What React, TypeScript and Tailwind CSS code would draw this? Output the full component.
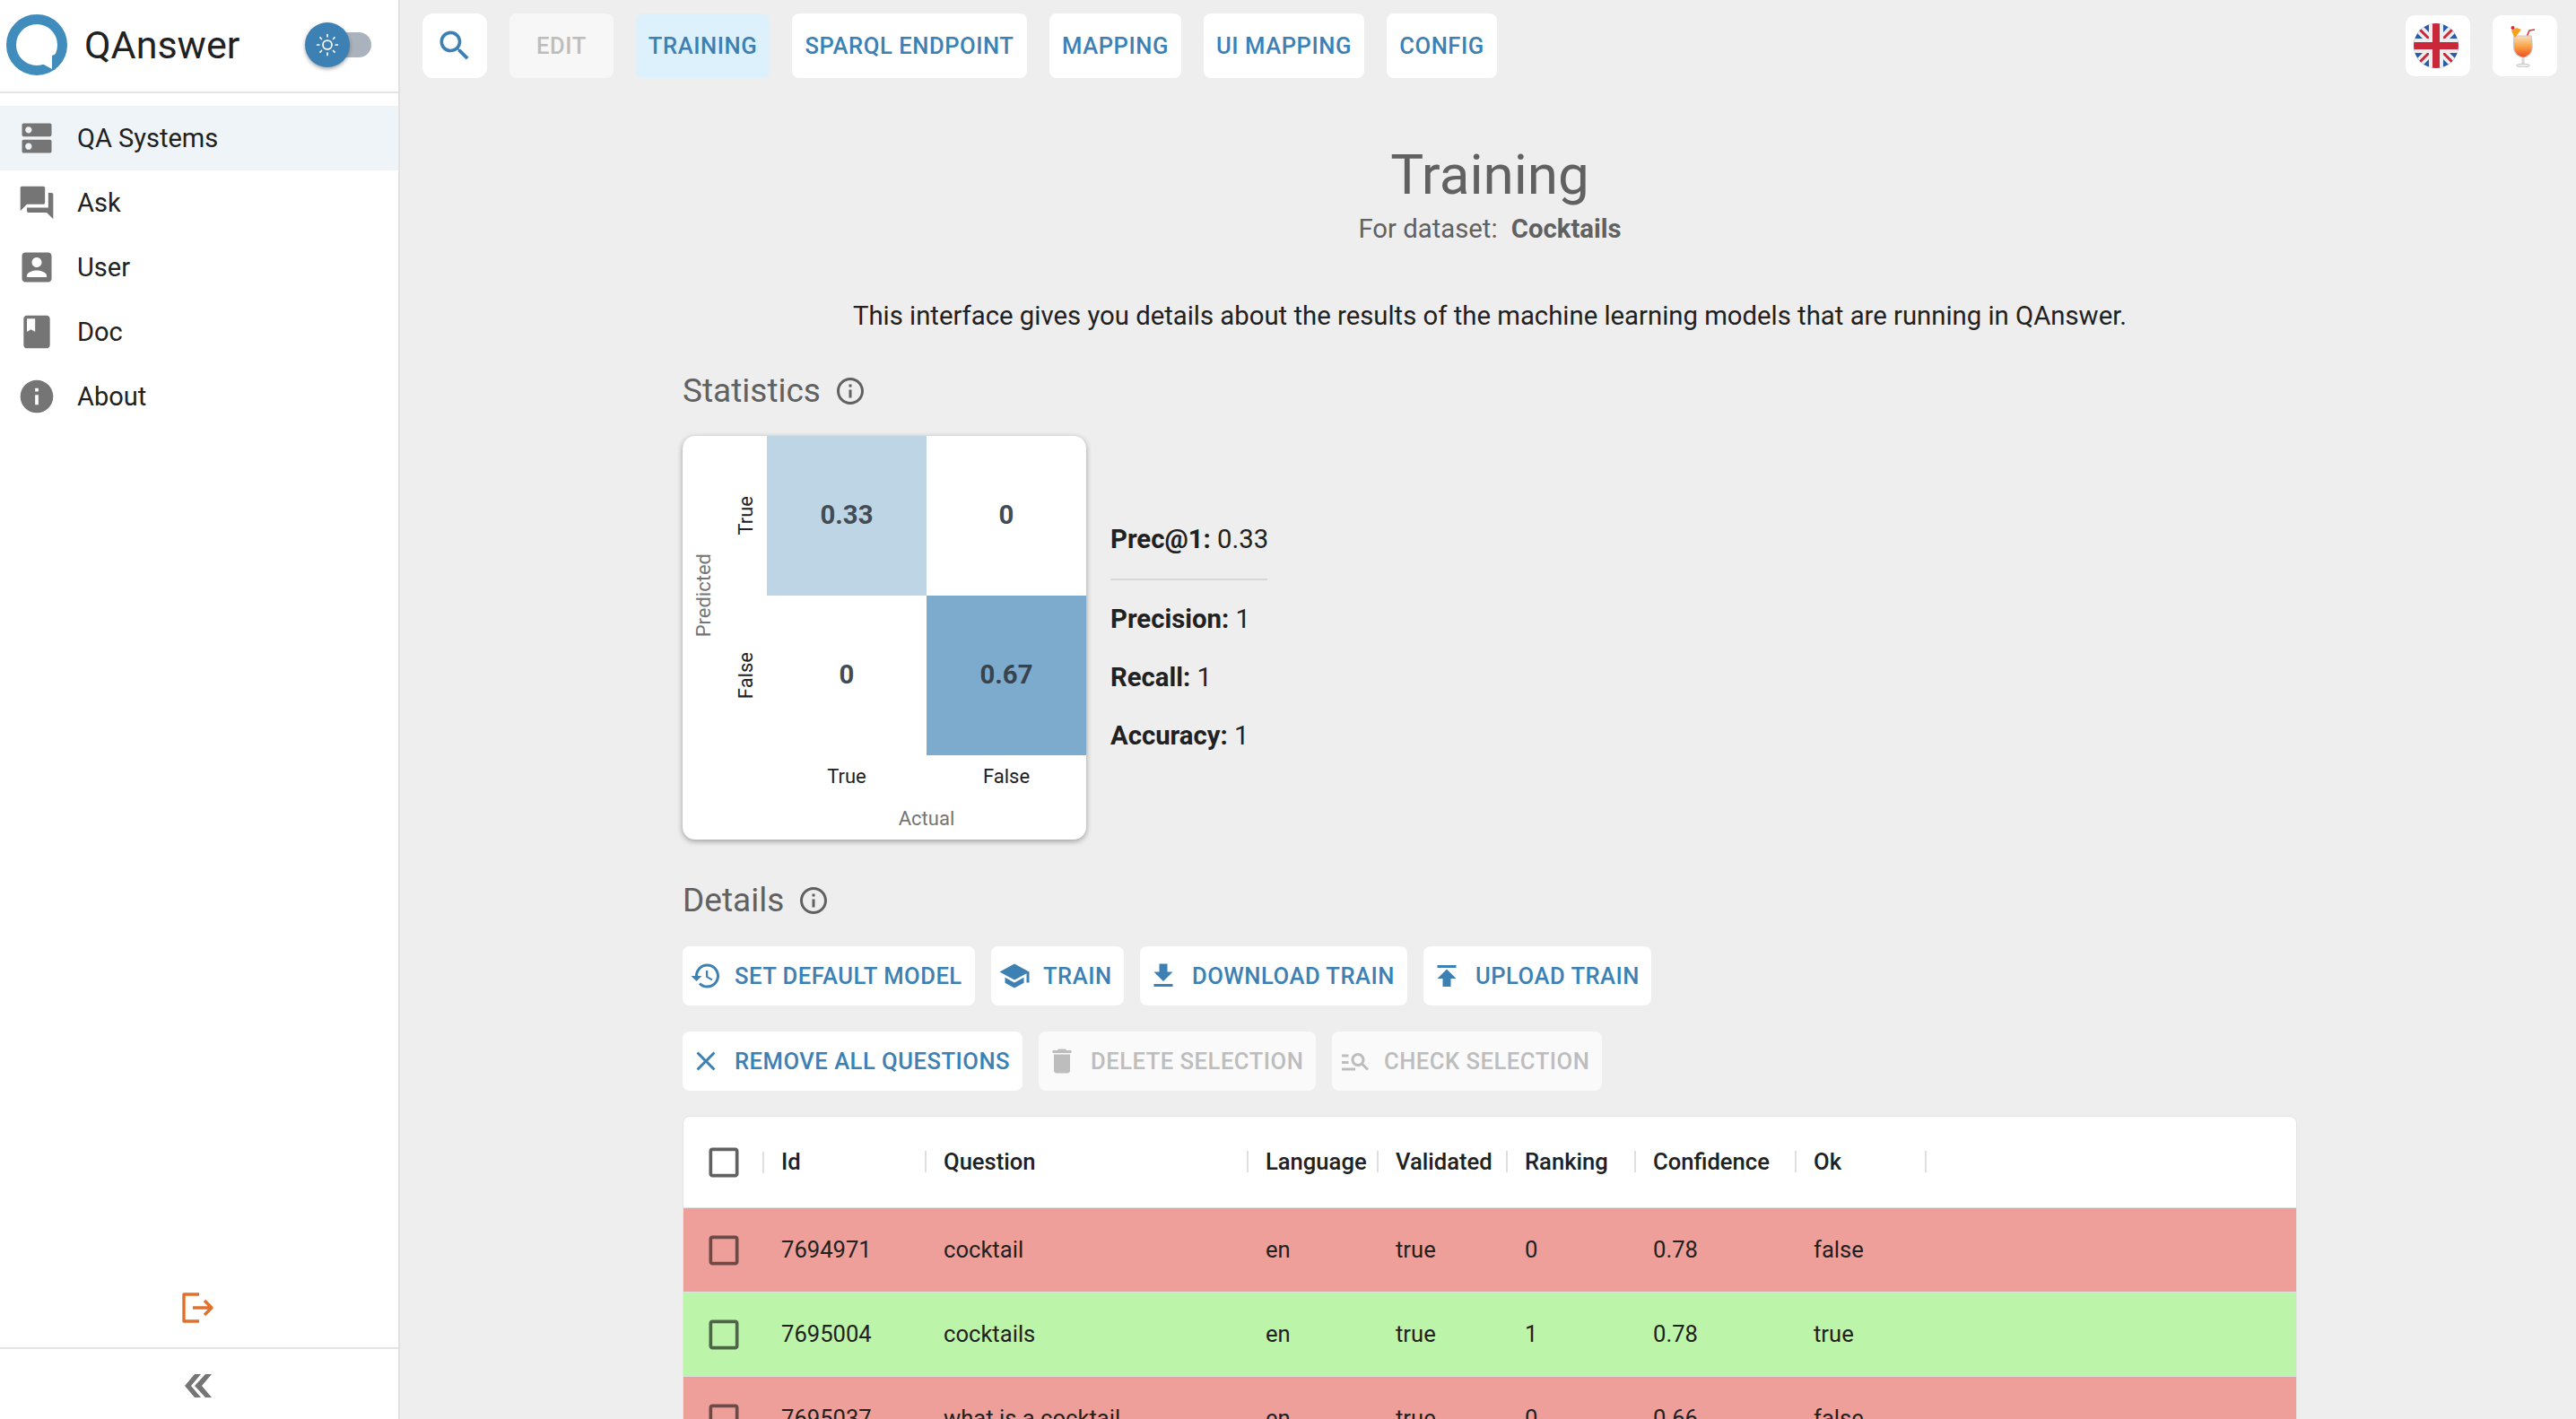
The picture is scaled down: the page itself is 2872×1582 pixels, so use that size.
import React from "react";

const paths = {
  dns: "M20 13H4c-.55 0-1 .45-1 1v6c0 .55.45 1 1 1h16c.55 0 1-.45 1-1v-6c0-.55-.45-1-1-1zM7 19c-1.1 0-2-.9-2-2s.9-2 2-2 2 .9 2 2-.9 2-2 2zM20 3H4c-.55 0-1 .45-1 1v6c0 .55.45 1 1 1h16c.55 0 1-.45 1-1V4c0-.55-.45-1-1-1zM7 9c-1.1 0-2-.9-2-2s.9-2 2-2 2 .9 2 2-.9 2-2 2z",
  forum: "M21 6h-2v9H6v2c0 .55.45 1 1 1h11l4 4V7c0-.55-.45-1-1-1zm-4 6V3c0-.55-.45-1-1-1H3c-.55 0-1 .45-1 1v14l4-4h10c.55 0 1-.45 1-1z",
  account: "M3 5v14c0 1.1.89 2 2 2h14c1.1 0 2-.9 2-2V5c0-1.1-.9-2-2-2H5c-1.11 0-2 .9-2 2zm12 4c0 1.66-1.34 3-3 3s-3-1.34-3-3 1.34-3 3-3 3 1.34 3 3zm-9 8c0-2 4-3.1 6-3.1s6 1.1 6 3.1v1H6v-1z",
  book: "M18 2H6c-1.1 0-2 .9-2 2v16c0 1.1.9 2 2 2h12c1.1 0 2-.9 2-2V4c0-1.1-.9-2-2-2zM6 4h5v8l-2.5-1.5L6 12V4z",
  info: "M12 2C6.48 2 2 6.48 2 12s4.48 10 10 10 10-4.48 10-10S17.52 2 12 2zm1 15h-2v-6h2v6zm0-8h-2V7h2v2z",
  infoOutline: "M11 7h2v2h-2zm0 4h2v6h-2zm1-9C6.48 2 2 6.48 2 12s4.48 10 10 10 10-4.48 10-10S17.52 2 12 2zm0 18c-4.41 0-8-3.59-8-8s3.59-8 8-8 8 3.59 8 8-3.59 8-8 8z",
  search: "M15.5 14h-.79l-.28-.27C15.41 12.59 16 11.11 16 9.5 16 5.91 13.09 3 9.5 3S3 5.91 3 9.5 5.91 16 9.5 16c1.61 0 3.09-.59 4.23-1.57l.27.28v.79l5 4.99L20.49 19l-4.99-5zm-6 0C7.01 14 5 11.99 5 9.5S7.01 5 9.5 5 14 7.01 14 9.5 11.99 14 9.5 14z",
  restore: "M13 3c-4.97 0-9 4.03-9 9H1l3.89 3.89.07.14L9 12H6c0-3.87 3.13-7 7-7s7 3.13 7 7-3.13 7-7 7c-1.93 0-3.68-.79-4.94-2.06l-1.42 1.42C8.27 19.99 10.51 21 13 21c4.97 0 9-4.03 9-9s-4.03-9-9-9zm-1 5v5l4.28 2.54.72-1.21-3.5-2.08V8H12z",
  school: "M5 13.18v4L12 21l7-3.82v-4L12 17l-7-3.82zM12 3 1 9l11 6 9-4.91V17h2V9L12 3z",
  download: "M19 9h-4V3H9v6H5l7 7 7-7zM5 18v2h14v-2H5z",
  upload: "M5 4v2h14V4H5zm0 10h4v6h6v-6h4l-7-7-7 7z",
  close: "M19 6.41 17.59 5 12 10.59 6.41 5 5 6.41 10.59 12 5 17.59 6.41 19 12 13.41 17.59 19 19 17.59 13.41 12z",
  trash: "M6 19c0 1.1.9 2 2 2h8c1.1 0 2-.9 2-2V7H6v12zM19 4h-3.5l-1-1h-5l-1 1H5v2h14V4z",
  manage: "M7 9H2V7h5v2zm0 3H2v2h5v-2zm13.59 7-3.83-3.83c-.8.52-1.74.83-2.76.83-2.76 0-5-2.24-5-5s2.24-5 5-5 5 2.24 5 5c0 1.02-.31 1.96-.83 2.75L22 17.59 20.59 19zM17 11c0-1.65-1.35-3-3-3s-3 1.35-3 3 1.35 3 3 3 3-1.35 3-3zM2 19h10v-2H2v2z",
  box: "M19 5v14H5V5h14m0-2H5c-1.1 0-2 .9-2 2v14c0 1.1.9 2 2 2h14c1.1 0 2-.9 2-2V5c0-1.1-.9-2-2-2z",
};

const Icon = ({ d, className }: { d: string; className: string }) => (
  <svg viewBox="0 0 24 24" fill="currentColor" className={className}>
    <path d={d} />
  </svg>
);

const Logo = () => (
  <svg viewBox="0 0 68 68" className="w-[68px] h-[68px] shrink-0">
    <circle cx="34" cy="34" r="28.5" fill="none" stroke="#408cbc" strokeWidth="11" />
    <path d="M40 55 L51 61 L51 46 Z" fill="#fff" />
    <path d="M51 61 L51 46 L56 44 L62 50 L54 62 Z" fill="#408cbc" />
  </svg>
);

const Flag = () => (
  <svg viewBox="0 0 50 50" className="w-[50px] h-[50px]">
    <defs>
      <clipPath id="flag-circle">
        <circle cx="25" cy="25" r="25" />
      </clipPath>
    </defs>
    <g clipPath="url(#flag-circle)">
      <rect width="50" height="50" fill="#2a5bab" />
      <path d="M0 0 L50 50 M50 0 L0 50" stroke="#eee" strokeWidth="10" />
      <path d="M6 6 L20 20 M44 6 L30 20 M6 44 L20 30 M44 44 L30 30" stroke="#c8283a" strokeWidth="3" />
      <rect x="17" width="16" height="50" fill="#eee" />
      <rect y="17" width="50" height="16" fill="#eee" />
      <rect x="21" width="8" height="50" fill="#c8283a" />
      <rect y="21" width="50" height="8" fill="#c8283a" />
    </g>
  </svg>
);

const Cocktail = () => (
  <svg viewBox="0 0 28 47" className="w-[28px] h-[47px]">
    <defs>
      <linearGradient id="drink" x1="0" y1="0" x2="0" y2="1">
        <stop offset="0" stopColor="#fbdcc0" />
        <stop offset="0.45" stopColor="#f9a94a" />
        <stop offset="1" stopColor="#ee4a1e" />
      </linearGradient>
    </defs>
    <path d="M18 13 L21 6 L27 5" fill="none" stroke="#e0362c" strokeWidth="1.6" />
    <path d="M4 12 C3 24 2 33 13 36 L15 36 C26 33 25 24 23 12 Z" fill="url(#drink)" stroke="#c9c9c9" strokeWidth="1.2" />
    <rect x="12.5" y="36" width="3" height="8" fill="#d8d8d8" />
    <ellipse cx="14" cy="45" rx="7.5" ry="1.8" fill="#eee" stroke="#bbb" strokeWidth="0.8" />
    <path d="M4 13 L1 6 L7 3 L12 5 L5 14 Z" fill="#f5a21f" />
    <circle cx="2.5" cy="3" r="2" fill="#d8282e" />
  </svg>
);

const menu = [
  { label: "QA Systems", icon: paths.dns, active: true },
  { label: "Ask", icon: paths.forum },
  { label: "User", icon: paths.account },
  { label: "Doc", icon: paths.book },
  { label: "About", icon: paths.info },
];

const Sidebar = () => (
  <aside className="w-[446px] shrink-0 h-full bg-white border-r-2 border-[#e2e2e2] flex flex-col">
    <div className="h-[104px] shrink-0 border-b-2 border-[#e4e4e4] flex items-center pl-[7px] pb-[2px]">
      <Logo />
      <span className="ml-[19px] text-[43px] text-[#212121]">QAnswer</span>
      <div className="relative ml-auto mr-[30px] w-[60px] h-[28px] rounded-full bg-[#aab3bd]">
        <div className="absolute -left-[14px] -top-[11px] w-[50px] h-[50px] rounded-full bg-[#3d81b4] shadow-[0_2px_4px_rgba(0,0,0,0.35)] flex items-center justify-center">
          <svg viewBox="0 0 24 24" className="w-[26px] h-[26px]" fill="none" stroke="#fff" strokeWidth="1.6" strokeLinecap="round">
            <circle cx="12" cy="12" r="4.6" />
            <path d="M12 1.5v2M12 20.5v2M1.5 12h2M20.5 12h2M4.6 4.6 6 6M18 18l1.4 1.4M4.6 19.4 6 18M18 6l1.4-1.4" />
          </svg>
        </div>
      </div>
    </div>
    <nav className="mt-[14px] flex flex-col">
      {menu.map((item) => (
        <div
          key={item.label}
          className={`h-[72px] flex items-center pl-[19px] gap-[23px] text-[29px] text-[#212121] ${item.active ? "bg-[#eff4f8]" : ""}`}
        >
          <Icon d={item.icon} className="w-[44px] h-[44px] text-[#757575]" />
          <span className="pt-[2px]">{item.label}</span>
        </div>
      ))}
    </nav>
    <div className="mt-auto h-[102px] flex items-center justify-center pt-[14px] pr-[2px]">
      <svg viewBox="0 0 36 34" className="w-[36px] h-[34px]" fill="none" stroke="#e0712c" strokeWidth="3.4" strokeLinejoin="round">
        <path d="M19 2 H2 V32 H19" />
        <path d="M12 17 H33 M25 9 L33 17 L25 25" />
      </svg>
    </div>
    <div className="h-[80px] border-t-2 border-[#e4e4e4] flex items-center justify-center pt-[3px] pr-[2px]">
      <svg viewBox="0 0 30 26" className="w-[30px] h-[26px]" fill="#757575">
        <path d="M0 13 L11 0 H18 L7 13 L18 26 H11 Z" />
        <path d="M11 13 L23 0 H30 L19 13 L30 26 H23 Z" />
      </svg>
    </div>
  </aside>
);

const tabs = [
  { label: "EDIT", w: "w-[116px]", cls: "text-[#bdbdbd] bg-white/50" },
  { label: "TRAINING", w: "w-[149px]", cls: "text-[#3d81b4] bg-[#ddf1fc]" },
  { label: "SPARQL ENDPOINT", w: "w-[262px]", cls: "text-[#3d81b4] bg-white" },
  { label: "MAPPING", w: "w-[147px]", cls: "text-[#3d81b4] bg-white" },
  { label: "UI MAPPING", w: "w-[179px]", cls: "text-[#3d81b4] bg-white" },
  { label: "CONFIG", w: "w-[123px]", cls: "text-[#3d81b4] bg-white" },
];

const TopBar = () => (
  <div className="h-[87px] shrink-0 flex items-end pl-[25px] pr-[21px]">
    <div className="w-[72px] h-[72px] rounded-[12px] bg-white flex items-center justify-center">
      <Icon d={paths.search} className="w-[44px] h-[44px] text-[#3d81b4]" />
    </div>
    <div className="flex gap-[25px] ml-[25px]">
      {tabs.map((t) => (
        <div
          key={t.label}
          className={`${t.w} h-[72px] rounded-[8px] flex items-center justify-center text-[25.6px] font-medium tracking-[0.55px] ${t.cls}`}
        >
          {t.label}
        </div>
      ))}
    </div>
    <div className="ml-auto flex gap-[25px] pb-[2px]">
      <div className="w-[72px] h-[68px] rounded-[10px] bg-white flex items-center justify-center pr-[4px]">
        <Flag />
      </div>
      <div className="w-[72px] h-[68px] rounded-[10px] bg-white flex items-center justify-center pr-[4px]">
        <Cocktail />
      </div>
    </div>
  </div>
);

const Heading = ({ text }: { text: string }) => (
  <div className="flex items-center gap-[15px] text-[37px] leading-[44px] text-[#616161]">
    {text}
    <Icon d={paths.infoOutline} className="w-[36px] h-[36px] text-[#616161]" />
  </div>
);

const Matrix = () => (
  <div className="w-[450px] h-[450px] shrink-0 rounded-[14px] bg-white overflow-hidden shadow-[0_2px_6px_rgba(0,0,0,0.35)] grid grid-cols-[46px_48px_178px_178px] grid-rows-[178px_178px_94px]">
    <div className="row-span-2 flex items-center justify-center text-[22px] text-[#757575]">
      <span className="[writing-mode:vertical-rl] rotate-180">Predicted</span>
    </div>
    <div className="flex items-center justify-center text-[22px] text-[#212121]">
      <span className="[writing-mode:vertical-rl] rotate-180">True</span>
    </div>
    <div className="bg-[#bed5e5] flex items-center justify-center text-[29.3px] font-bold text-[#434c55]">0.33</div>
    <div className="flex items-center justify-center text-[29.3px] font-bold text-[#434c55]">0</div>
    <div className="flex items-center justify-center text-[22px] text-[#212121]">
      <span className="[writing-mode:vertical-rl] rotate-180">False</span>
    </div>
    <div className="flex items-center justify-center text-[29.3px] font-bold text-[#434c55]">0</div>
    <div className="bg-[#7cabcd] flex items-center justify-center text-[29.3px] font-bold text-[#39434c]">0.67</div>
    <div className="col-span-4 pl-[94px] flex flex-col">
      <div className="flex h-[46px] items-center text-[22px] text-[#212121]">
        <span className="w-[178px] text-center">True</span>
        <span className="w-[178px] text-center">False</span>
      </div>
      <div className="text-[22px] text-[#757575] text-center mt-[8px]">Actual</div>
    </div>
  </div>
);

const Stat = ({ label, value }: { label: string; value: string }) => (
  <div className="text-[29.3px] leading-[36px] text-[#212121] whitespace-nowrap">
    <span className="font-bold">{label}</span> {value}
  </div>
);

const actions1 = [
  { label: "SET DEFAULT MODEL", icon: paths.restore, w: "w-[326px]" },
  { label: "TRAIN", icon: paths.school, w: "w-[148px]" },
  { label: "DOWNLOAD TRAIN", icon: paths.download, w: "w-[298px]" },
  { label: "UPLOAD TRAIN", icon: paths.upload, w: "w-[254px]" },
];
const actions2 = [
  { label: "REMOVE ALL QUESTIONS", icon: paths.close, w: "w-[379px]" },
  { label: "DELETE SELECTION", icon: paths.trash, w: "w-[309px]", off: true },
  { label: "CHECK SELECTION", icon: paths.manage, w: "w-[301px]", off: true },
];

type Action = { label: string; icon: string; w: string; off?: boolean };

const ActionButton = ({ a }: { a: Action }) => (
  <div
    className={`${a.w} h-[66px] rounded-[8px] flex items-center pl-[8px] gap-[14px] whitespace-nowrap text-[25.6px] font-medium tracking-[0.5px] ${a.off ? "bg-white/70 text-[#bdbdbd]" : "bg-white text-[#3d81b4]"}`}
  >
    <Icon d={a.icon} className="w-[36px] h-[36px] shrink-0" />
    {a.label}
  </div>
);

const columns = ["Id", "Question", "Language", "Validated", "Ranking", "Confidence", "Ok"];
const rows = [
  { cells: ["7694971", "cocktail", "en", "true", "0", "0.78", "false"], ok: false },
  { cells: ["7695004", "cocktails", "en", "true", "1", "0.78", "true"], ok: true },
  { cells: ["7695037", "what is a cocktail", "en", "true", "0", "0.66", "false"], ok: false },
];
const gridCols = "grid grid-cols-[90px_181px_359px_145px_144px_143px_179px_145px_1fr]";

const Table = () => (
  <div className="mt-[28px] w-full rounded-t-[8px] border border-[#e4e4e4] bg-white overflow-hidden">
    <div className={`${gridCols} h-[101px] items-center text-[25.6px] font-medium text-[#212121]`}>
      <div className="flex items-center justify-between h-[36px] pl-[24px]">
        <Icon d={paths.box} className="w-[44px] h-[44px] text-[#616161] -ml-[1px]" />
        <span className="w-[2px] h-[24px] bg-[#e0e0e0]" />
      </div>
      {columns.map((c) => (
        <div key={c} className="flex items-center justify-between pl-[19px]">
          {c}
          <span className="w-[2px] h-[24px] bg-[#e0e0e0]" />
        </div>
      ))}
    </div>
    {rows.map((r) => (
      <div
        key={r.cells[0]}
        className={`${gridCols} h-[94px] items-center border-t border-[#e0e0e0] text-[25.6px] text-[#212121] ${r.ok ? "bg-[#bcf5a9]" : "bg-[#ef9f99]"}`}
      >
        <div className="pl-[23px]">
          <Icon d={paths.box} className={`w-[44px] h-[44px] ${r.ok ? "text-[#4d6647]" : "text-[#6d4a48]"}`} />
        </div>
        {r.cells.map((c, i) => (
          <div key={i} className="pl-[19px]">
            {c}
          </div>
        ))}
      </div>
    ))}
  </div>
);

export default function App() {
  return (
    <div className="w-[2872px] h-[1582px] flex overflow-hidden bg-[#eeeeee] font-['Roboto',sans-serif]">
      <Sidebar />
      <main className="flex-1 min-w-0 flex flex-col">
        <TopBar />
        <div className="flex-1 overflow-hidden pl-[315px] pr-[311px]">
          <div className="mt-[72px] text-center text-[62px] leading-[72px] text-[#616161]">Training</div>
          <div className="text-center text-[29.3px] leading-[36px] text-[#616161] mt-[6px]">
            For dataset: <span className="ml-[8px] font-bold">Cocktails</span>
          </div>
          <div className="mt-[61px] text-center text-[29.3px] leading-[36px] text-[#212121]">
            This interface gives you details about the results of the machine learning models that are running in QAnswer.
          </div>
          <div className="mt-[44px]">
            <Heading text="Statistics" />
          </div>
          <div className="mt-[28px] flex items-start">
            <Matrix />
            <div className="ml-[27px] w-[175px] pt-[97px]">
              <Stat label="Prec@1:" value="0.33" />
              <div className="h-[2px] bg-[#d8d8d8] mt-[26px] mb-[25px]" />
              <div className="flex flex-col gap-[29px]">
                <Stat label="Precision:" value="1" />
                <Stat label="Recall:" value="1" />
                <Stat label="Accuracy:" value="1" />
              </div>
            </div>
          </div>
          <div className="mt-[46px]">
            <Heading text="Details" />
          </div>
          <div className="mt-[29px] flex gap-[18px]">
            {actions1.map((a) => (
              <ActionButton key={a.label} a={a} />
            ))}
          </div>
          <div className="mt-[29px] flex gap-[18px]">
            {actions2.map((a) => (
              <ActionButton key={a.label} a={a} />
            ))}
          </div>
          <Table />
        </div>
      </main>
    </div>
  );
}
